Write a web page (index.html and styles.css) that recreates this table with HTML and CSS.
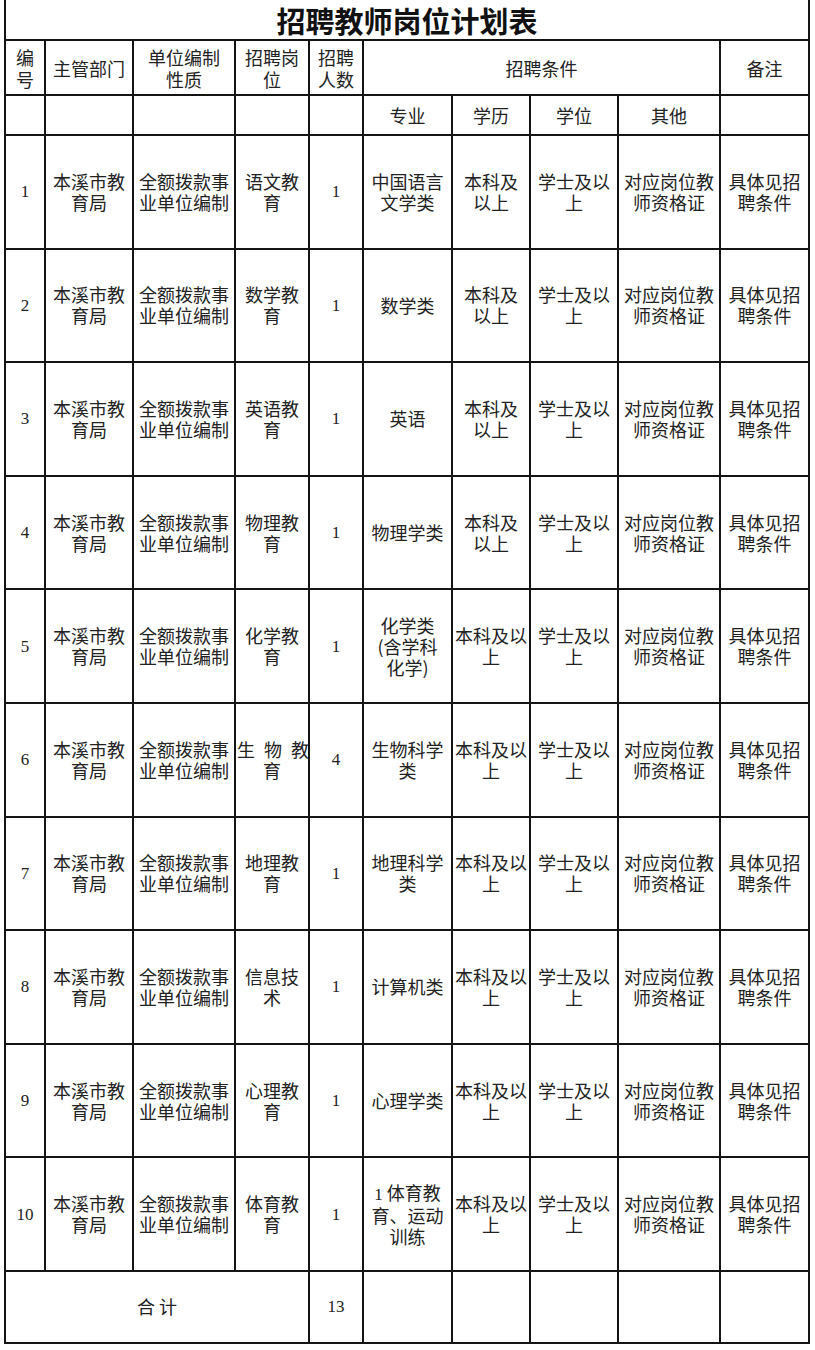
FILE: index.html
```html
<!DOCTYPE html>
<html lang="zh-CN">
<head>
<meta charset="utf-8">
<title>招聘教师岗位计划表</title>
<link rel="stylesheet" href="styles.css">
</head>
<body>
<div class="page">
<table class="plan">
  <colgroup>
    <col class="c1"><col class="c2"><col class="c3"><col class="c4"><col class="c5">
    <col class="c6"><col class="c7"><col class="c8"><col class="c9"><col class="c10">
  </colgroup>
  <tr class="r-title"><td colspan="10" class="title">招聘教师岗位计划表</td></tr>
  <tr class="r-h1">
    <td>编<br>号</td>
    <td>主管部门</td>
    <td>单位编制<br>性质</td>
    <td>招聘岗<br>位</td>
    <td>招聘<br>人数</td>
    <td colspan="4">招聘条件</td>
    <td>备注</td>
  </tr>
  <tr class="r-h2">
    <td></td><td></td><td></td><td></td><td></td>
    <td>专业</td><td>学历</td><td>学位</td><td>其他</td><td></td>
  </tr>
  <tr class="r-d">
    <td class="num">1</td><td>本溪市教<br>育局</td><td>全额拨款事<br>业单位编制</td><td>语文教<br>育</td><td class="num">1</td>
    <td>中国语言<br>文学类</td><td>本科及<br>以上</td><td>学士及以<br>上</td><td>对应岗位教<br>师资格证</td><td>具体见招<br>聘条件</td>
  </tr>
  <tr class="r-d">
    <td class="num">2</td><td>本溪市教<br>育局</td><td>全额拨款事<br>业单位编制</td><td>数学教<br>育</td><td class="num">1</td>
    <td>数学类</td><td>本科及<br>以上</td><td>学士及以<br>上</td><td>对应岗位教<br>师资格证</td><td>具体见招<br>聘条件</td>
  </tr>
  <tr class="r-d">
    <td class="num">3</td><td>本溪市教<br>育局</td><td>全额拨款事<br>业单位编制</td><td>英语教<br>育</td><td class="num">1</td>
    <td>英语</td><td>本科及<br>以上</td><td>学士及以<br>上</td><td>对应岗位教<br>师资格证</td><td>具体见招<br>聘条件</td>
  </tr>
  <tr class="r-d">
    <td class="num">4</td><td>本溪市教<br>育局</td><td>全额拨款事<br>业单位编制</td><td>物理教<br>育</td><td class="num">1</td>
    <td>物理学类</td><td>本科及<br>以上</td><td>学士及以<br>上</td><td>对应岗位教<br>师资格证</td><td>具体见招<br>聘条件</td>
  </tr>
  <tr class="r-d">
    <td class="num">5</td><td>本溪市教<br>育局</td><td>全额拨款事<br>业单位编制</td><td>化学教<br>育</td><td class="num">1</td>
    <td>化学类<br>(含学科<br>化学)</td><td>本科及以<br>上</td><td>学士及以<br>上</td><td>对应岗位教<br>师资格证</td><td>具体见招<br>聘条件</td>
  </tr>
  <tr class="r-d">
    <td class="num">6</td><td>本溪市教<br>育局</td><td>全额拨款事<br>业单位编制</td><td class="spread"><span class="sp">生</span><span class="sp">物</span><span>教</span><br>育</td><td class="num">4</td>
    <td>生物科学<br>类</td><td>本科及以<br>上</td><td>学士及以<br>上</td><td>对应岗位教<br>师资格证</td><td>具体见招<br>聘条件</td>
  </tr>
  <tr class="r-d">
    <td class="num">7</td><td>本溪市教<br>育局</td><td>全额拨款事<br>业单位编制</td><td>地理教<br>育</td><td class="num">1</td>
    <td>地理科学<br>类</td><td>本科及以<br>上</td><td>学士及以<br>上</td><td>对应岗位教<br>师资格证</td><td>具体见招<br>聘条件</td>
  </tr>
  <tr class="r-d">
    <td class="num">8</td><td>本溪市教<br>育局</td><td>全额拨款事<br>业单位编制</td><td>信息技<br>术</td><td class="num">1</td>
    <td>计算机类</td><td>本科及以<br>上</td><td>学士及以<br>上</td><td>对应岗位教<br>师资格证</td><td>具体见招<br>聘条件</td>
  </tr>
  <tr class="r-d">
    <td class="num">9</td><td>本溪市教<br>育局</td><td>全额拨款事<br>业单位编制</td><td>心理教<br>育</td><td class="num">1</td>
    <td>心理学类</td><td>本科及以<br>上</td><td>学士及以<br>上</td><td>对应岗位教<br>师资格证</td><td>具体见招<br>聘条件</td>
  </tr>
  <tr class="r-d">
    <td class="num">10</td><td>本溪市教<br>育局</td><td>全额拨款事<br>业单位编制</td><td>体育教<br>育</td><td class="num">1</td>
    <td><span class="lat">1</span> 体育教<br>育、运动<br>训练</td><td>本科及以<br>上</td><td>学士及以<br>上</td><td>对应岗位教<br>师资格证</td><td>具体见招<br>聘条件</td>
  </tr>
  <tr class="r-total">
    <td colspan="4" class="total">合&nbsp;计</td><td class="num">13</td>
    <td></td><td></td><td></td><td></td><td></td>
  </tr>
</table>
</div>
</body>
</html>
```
FILE: styles.css
```css
html, body {
  margin: 0;
  padding: 0;
  background: #ffffff;
}

.page {
  padding-left: 4px;
}

.plan {
  border-collapse: collapse;
  table-layout: fixed;
  width: 806px;
  font-family: "Noto Sans CJK SC", "Noto Sans", sans-serif;
  font-size: 18px;
  line-height: 21px;
  color: #222222;
}

.c1 { width: 40px; }
.c2 { width: 88px; }
.c3 { width: 102px; }
.c4 { width: 74px; }
.c5 { width: 54px; }
.c6 { width: 89px; }
.c7 { width: 78px; }
.c8 { width: 88px; }
.c9 { width: 102px; }
.c10 { width: 89px; }

.plan td {
  border: 2px solid #141414;
  padding: 0 1px;
  text-align: center;
  vertical-align: middle;
  overflow: hidden;
  white-space: nowrap;
}

.r-title td {
  border-top: none;
}

.title {
  height: 39px;
  font-size: 29px;
  line-height: 34px;
  font-weight: 700;
  color: #111111;
  padding-bottom: 2px;
}

.r-h1 td {
  height: 53px;
  line-height: 22px;
}

.r-h2 td {
  height: 38px;
}

.r-d td {
  height: 111.6px;
}

.r-total td {
  height: 70px;
}

.num, .lat {
  font-family: "Liberation Serif", "Times New Roman", serif;
  font-size: 17px;
}

.spread {
  text-align: left;
  padding: 0;
}

.sp {
  margin-right: 9px;
}

.total {
  letter-spacing: 0;
}
```
